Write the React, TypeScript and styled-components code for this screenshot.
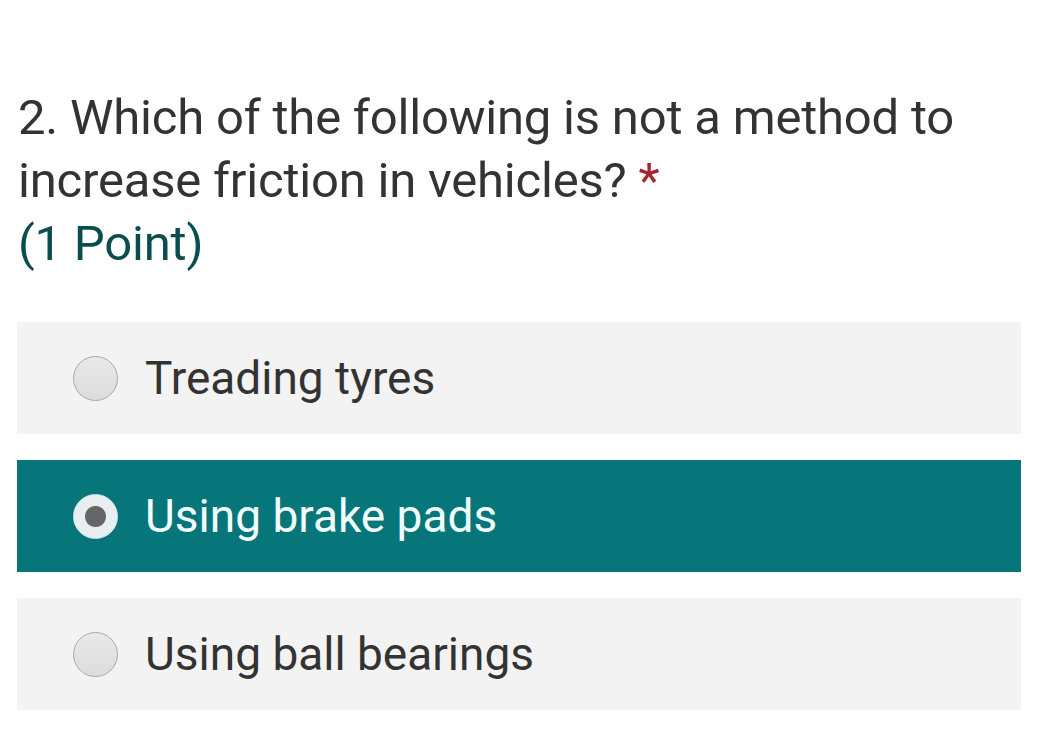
import React from "react";
import styled, { createGlobalStyle } from "styled-components";

const Global = createGlobalStyle`
  html, body { margin: 0; padding: 0; background: #ffffff; }
  body { font-family: Roboto, "Noto Sans", Arial, sans-serif; }
`;

const Page = styled.div`
  width: 1058px;
  height: 752px;
  box-sizing: border-box;
  padding: 86px 37px 0 17px;
  display: flex;
  flex-direction: column;
`;

const Question = styled.div`
  font-size: 49px;
  line-height: 63px;
  color: #333333;
  padding-left: 1px;
  letter-spacing: -0.2px;
`;

const Star = styled.span`
  color: #a4262c;
  margin-left: 12px;
`;

const Points = styled.div`
  color: #0b4d4d;
`;

const Options = styled.div`
  margin-top: 47px;
  display: flex;
  flex-direction: column;
  gap: 26px;
`;

const Option = styled.div<{ $selected?: boolean }>`
  height: 112px;
  display: flex;
  align-items: center;
  padding-left: 56px;
  background: ${(p) => (p.$selected ? "#06767a" : "#f3f3f3")};
  color: ${(p) => (p.$selected ? "#f2ffff" : "#333333")};
  font-size: 46px;
`;

const Radio = styled.span<{ $selected?: boolean }>`
  width: 45px;
  height: 45px;
  box-sizing: border-box;
  border-radius: 50%;
  border: 1px solid ${(p) => (p.$selected ? "#d8e4e6" : "#a9a9a9")};
  background: ${(p) =>
    p.$selected
      ? "radial-gradient(circle, #666666 0 10px, #e9eef0 11px)"
      : "linear-gradient(#e9e9e9, #dcdcdc)"};
  margin-right: 27px;
  flex-shrink: 0;
`;

const Label = styled.span`
  line-height: 1;
`;

const options = ["Treading tyres", "Using brake pads", "Using ball bearings"];

export default function App() {
  return (
    <>
      <Global />
      <Page>
        <Question>
          2. Which of the following is not a method to increase friction in vehicles?
          <Star>*</Star>
          <Points>(1 Point)</Points>
        </Question>
        <Options>
          {options.map((o, i) => (
            <Option key={o} $selected={i === 1}>
              <Radio $selected={i === 1} />
              <Label>{o}</Label>
            </Option>
          ))}
        </Options>
      </Page>
    </>
  );
}
